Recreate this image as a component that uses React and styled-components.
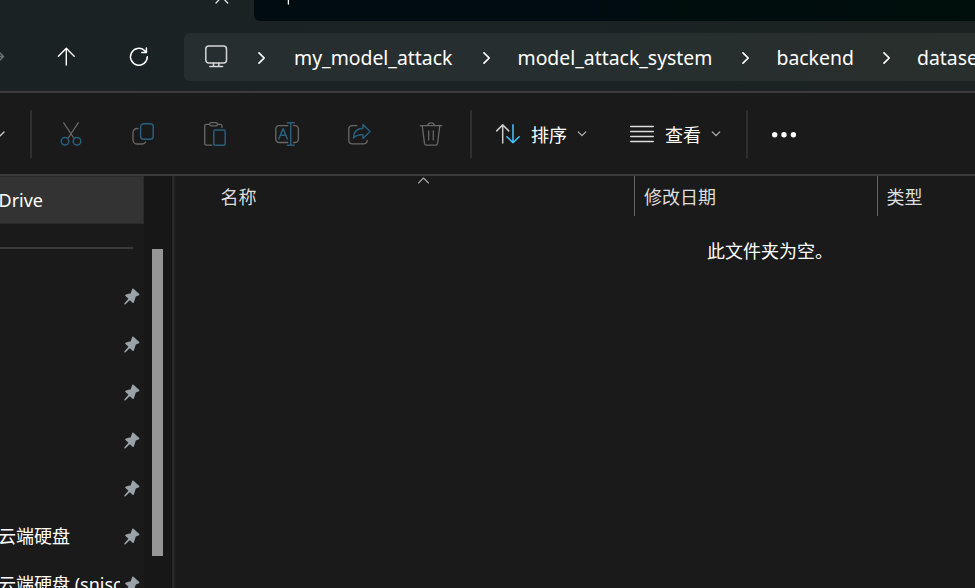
import React from "react";
import styled, { createGlobalStyle } from "styled-components";

const GlobalStyle = createGlobalStyle`
  * { box-sizing: border-box; }
  html, body { margin: 0; background: #1a1a1a; overflow: hidden; }
  body { font-family: "Noto Sans", "Noto Sans CJK SC", sans-serif; color: #fff; }
  svg { display: block; flex: none; overflow: visible; }
`;

const Window = styled.div`
  width: 975px;
  height: 588px;
  display: flex;
  flex-direction: column;
  overflow: hidden;
  background: #1a1a1a;
`;

const Header = styled.header`
  height: 93px;
  flex: none;
  background: linear-gradient(90deg, #1b2224, #1b2325 45%, #1c2221);
  border-bottom: 2px solid #3b3b3b;
`;

const TabStrip = styled.div`
  height: 21px;
  display: flex;
  overflow: hidden;
`;

const ActiveTab = styled.div`
  width: 254px;
  padding-left: 214px;
`;

const TabSpace = styled.div`
  flex: 1;
  padding-left: 26px;
  border-bottom-left-radius: 6px;
  background: linear-gradient(90deg, #000c10, #000c12 45%, #000d0d 60%, #000e0c);
`;

const NavBar = styled.nav`
  height: 70px;
  display: flex;
  align-items: center;
  padding-bottom: 1px;
`;

const NavSlot = styled.div`
  width: ${(p) => p.$width}px;
  height: 24px;
  flex: none;
  display: flex;
  padding-left: ${(p) => p.$inset || 0}px;
`;

const AddressBar = styled.div`
  width: 800px;
  height: 48px;
  margin-top: 3px;
  flex: none;
  display: flex;
  align-items: center;
  padding-left: 20px;
  border-radius: 6px;
  background: linear-gradient(90deg, #272e30, #272e2f 50%, #282f2c);
`;

const MonitorSlot = styled.div`
  width: 50px;
  flex: none;
  padding-bottom: 2px;
`;

const Crumb = styled.span`
  width: ${(p) => p.$width}px;
  flex: none;
  padding-top: 2px;
  font-size: 19.4px;
  line-height: 26px;
  white-space: nowrap;
`;

const ChevronSlot = styled.div`
  width: ${(p) => p.$width}px;
  flex: none;
  padding: 2px 0 0 4px;
`;

const Toolbar = styled.div`
  height: 83px;
  flex: none;
  display: flex;
  align-items: center;
  border-bottom: 2px solid #3b3b3b;
`;

const Separator = styled.div`
  width: 2px;
  height: 48px;
  flex: none;
  background: #2f2f2f;
`;

const Action = styled.div`
  width: 72px;
  height: 24px;
  flex: none;
  display: flex;
`;

const ActionGroup = styled.div`
  display: flex;
  width: 438px;
  flex: none;
  padding-left: 27px;
`;

const MenuButton = styled.div`
  display: flex;
  align-items: center;
  flex: none;
  width: ${(p) => p.$width}px;
  padding-left: ${(p) => p.$inset || 0}px;
  font-size: 18px;
  line-height: 24px;
`;

const MenuLabel = styled.span`
  width: 46px;
  flex: none;
  margin-left: 11px;
  padding-top: 2px;
`;

const OverflowChevron = styled.div`
  width: 30px;
  height: 24px;
  flex: none;
`;

const Body = styled.div`
  flex: 1;
  min-height: 0;
  display: flex;
`;

const Sidebar = styled.aside`
  width: 144px;
  flex: none;
  overflow: hidden;
`;

const SelectedItem = styled.div`
  height: 48px;
  display: flex;
  align-items: center;
  font-size: 18px;
  text-indent: -1.5px;
  background: #333;
  border: solid #2a2a2a;
  border-width: 1px 1px 1px 0;
`;

const SideRule = styled.div`
  width: 133px;
  height: 2px;
  margin: 23px 0;
  background: #3b3b3b;
`;

const PinnedItem = styled.div`
  height: 48px;
  display: flex;
  align-items: center;
  font-size: 18px;
`;

const ItemName = styled.span`
  width: 120px;
  margin: 0 4px 2px 0;
  flex: none;
  overflow: hidden;
  white-space: nowrap;
  text-indent: -2px;
`;

const ScrollTrack = styled.div`
  width: 27px;
  flex: none;
  padding: 73px 0 0 8px;
  background: #171717;
`;

const ScrollThumb = styled.div`
  width: 11px;
  height: 307px;
  background: #969696;
`;

const Splitter = styled.div`
  width: 5px;
  flex: none;
  background: #2a2a2a;
  border-left: 1px solid #121212;
  border-right: 2px solid #1f1f1f;
`;

const FileList = styled.main`
  flex: 1;
`;

const Columns = styled.div`
  display: flex;
  height: 40px;
`;

const Column = styled.div`
  width: ${(p) => p.$width}px;
  flex: none;
  display: flex;
  padding-left: ${(p) => p.$inset}px;
  border-right: 1px solid #666;
  color: #dedede;
  font-size: 18px;
  line-height: 42px;
`;

const ColumnLabel = styled.span`
  width: ${(p) => p.$width}px;
`;

const Empty = styled.p`
  margin: 22px 0 0 531px;
  font-size: 18px;
  line-height: 26px;
`;

const GRAY = "#686868";
const BLUE = "#285f7d";

const Icon = ({ w = 24, h = 24, stroke = GRAY, sw = 1.3, children }) => (
  <svg width={w} height={h} viewBox={`0 0 ${w} ${h}`} fill="none" stroke={stroke} strokeWidth={sw} strokeLinecap="round" strokeLinejoin="round">
    {children}
  </svg>
);

const CrumbChevron = ({ width = 38.5 }) => (
  <ChevronSlot $width={width}>
    <Icon w={8} h={14} stroke="#fff" sw={1.7}><path d="M1 1.8 6.2 7 1 12.2" /></Icon>
  </ChevronSlot>
);

const MenuChevron = () => (
  <Icon w={10} h={6} stroke="#b8b8b8" sw={1.2}><path d="M1.2.9 5 4.7 8.8.9" /></Icon>
);

const Pin = () => (
  <svg width="16" height="17" viewBox="0 0 16 17" fill="#98a2a8">
    <path d="M9.2.5 15.5 6.2 15 7.3 11.8 8.6 9.8 14.7 8.8 15 5.8 12.2 1.2 16.4.2 16.5.3 15.4 4.4 10.7 1.2 7.7 1.3 6.7 6.7 5.2 8.2.8Z" />
  </svg>
);

const pinned = ["", "", "", "", "", "云端硬盘", "云端硬盘 (snisc"];

export default function App() {
  return (
    <Window>
      <GlobalStyle />
      <Header>
        <TabStrip>
          <ActiveTab>
            <Icon w={16} h={6} stroke="#e6e6e6" sw={1.3}><path d="M2 3 7.8-3.2 13.7 3" /></Icon>
          </ActiveTab>
          <TabSpace>
            <Icon w={16} h={6} stroke="#fff" sw={1.3}><path d="M8.4-2V4M2-2H15" /></Icon>
          </TabSpace>
        </TabStrip>
        <NavBar>
          <NavSlot $width={54}>
            <Icon stroke="#6d7374" sw={1.5}><path d="M-12 12.5H3.5M-1 8 3.5 12.5-1 17" /></Icon>
          </NavSlot>
          <NavSlot $width={73}>
            <Icon stroke="#fff" sw={1.4}><path d="M12.3 21V4.3M4.4 12.2 12.3 4.3 20.2 12.2" /></Icon>
          </NavSlot>
          <NavSlot $width={57}>
            <Icon stroke="#fff" sw={1.5}><path d="M20.3 12.8A8.4 8.4 0 1 1 17.5 6.5L19.2 8.2M19.4 4.1V8.5H14.8" /></Icon>
          </NavSlot>
          <AddressBar>
            <MonitorSlot>
              <Icon stroke="#d5d7d7" sw={1.5}>
                <rect x="1.8" y="2" width="20.7" height="17" rx="3" />
                <path d="M9.5 19v3.5M14.8 19v3.5M5.8 22.6H18.6" />
              </Icon>
            </MonitorSlot>
            <CrumbChevron width={40} />
            <Crumb $width={185}>my_model_attack</Crumb>
            <CrumbChevron />
            <Crumb $width={220.5}>model_attack_system</Crumb>
            <CrumbChevron />
            <Crumb $width={102}>backend</Crumb>
            <CrumbChevron />
            <Crumb $width={100}>dataset</Crumb>
          </AddressBar>
        </NavBar>
      </Header>

      <Toolbar>
        <OverflowChevron>
          <Icon stroke="#ccc"><path d="M-4.5 10 0 14 4 10" /></Icon>
        </OverflowChevron>
        <Separator />
        <ActionGroup>
          <Action>
            <Icon>
              <path d="M4.7.8 14.8 16M19.2.8 9.2 16" />
              <g stroke={BLUE} strokeWidth="1.5"><circle cx="6" cy="19.3" r="3.8" /><circle cx="18" cy="19.3" r="3.8" /></g>
            </Icon>
          </Action>
          <Action>
            <Icon>
              <path d="M7 6.5H6A4 4 0 0 0 2 10.5V18A4 4 0 0 0 6 22h5.5Q13.8 22 14.5 20" />
              <rect x="9.6" y="1.8" width="12.6" height="15.5" rx="3" stroke={BLUE} strokeWidth="1.5" />
            </Icon>
          </Action>
          <Action>
            <Icon>
              <path d="M6.5 2.3H3.5Q1.7 2.3 1.7 4V21.5Q1.7 23.2 3.5 23.2H8.8M14.5 2.3H17.3Q19 2.3 19 4V5.5" />
              <rect x="6.7" y=".7" width="7.8" height="3.2" rx="1.6" />
              <rect x="10.8" y="7.9" width="11.4" height="15.3" rx="1.5" stroke={BLUE} strokeWidth="1.5" />
            </Icon>
          </Action>
          <Action>
            <Icon>
              <path d="M12.7 3.7H4A3.2 3.2 0 0 0 .8 7V17.2A3.2 3.2 0 0 0 4 20.5h8.7M18.6 3.7H20A3.2 3.2 0 0 1 23.4 7V17.2A3.2 3.2 0 0 1 20 20.5H18.6" />
              <g stroke={BLUE} strokeWidth="1.5"><path d="M15.7.7V23.2M12.3.7H19.2M12.3 23.2H19.2M3.8 17 8.1 6.6 12.4 17M5.3 13.2H11" /></g>
            </Icon>
          </Action>
          <Action>
            <Icon>
              <path d="M9.8 3.7H5.2A3.5 3.5 0 0 0 1.8 7.2V18.3A3.5 3.5 0 0 0 5.2 21.8H16.8A3.5 3.5 0 0 0 20.2 18.3" />
              <path d="M16 2.5 23 9.5 16 16.5V12.7C11.8 12.5 8.8 13 6.4 16 6.6 10.2 9.8 6.5 16 6.3Z" stroke={BLUE} strokeWidth="1.5" />
            </Icon>
          </Action>
          <Action>
            <Icon>
              <path d="M1.3 3.6H22.8M3.2 3.6 5.5 21.4Q5.8 23.2 7.5 23.2H16.6Q18.3 23.2 18.6 21.4L20.8 3.6M8.8 3.2C9.3 0 14.8 0 15.3 3.2M9.7 9V17.8M14.3 9V17.8" />
            </Icon>
          </Action>
        </ActionGroup>
        <Separator />
        <MenuButton $width={158} $inset={24}>
          <Icon stroke="#ccc" sw={1.5}>
            <path d="M6.7 21V2.9M.7 8.9 6.7 2.9 12.7 8.9" />
            <path d="M17 2.8V20.8M10.9 14.7 17 20.8 23.1 14.7" stroke="#4cc2ff" />
          </Icon>
          <MenuLabel>排序</MenuLabel>
          <MenuChevron />
        </MenuButton>
        <MenuButton $width={116}>
          <Icon stroke="#ddd" sw={1.4}><path d="M.7 4.5H23.3M.7 9.5H23.3M.7 14.5H23.3M.7 19.5H23.3" /></Icon>
          <MenuLabel>查看</MenuLabel>
          <MenuChevron />
        </MenuButton>
        <Separator />
        <NavSlot $width={60} $inset={24}>
          <svg width="24" height="24" viewBox="0 0 24 24" fill="#fff">
            <circle cx="2.7" cy="12.7" r="2.7" /><circle cx="12" cy="12.7" r="2.7" /><circle cx="21.4" cy="12.7" r="2.7" />
          </svg>
        </NavSlot>
      </Toolbar>

      <Body>
        <Sidebar>
          <SelectedItem>Drive</SelectedItem>
          <SideRule />
          {pinned.map((name, i) => (
            <PinnedItem key={i}><ItemName>{name}</ItemName><Pin /></PinnedItem>
          ))}
        </Sidebar>
        <ScrollTrack><ScrollThumb /></ScrollTrack>
        <Splitter />
        <FileList>
          <Columns>
            <Column $width={459} $inset={44.5}>
              <ColumnLabel $width={196.5}>名称</ColumnLabel>
              <Icon w={13} h={9} stroke="#a8a8a8" sw={1.1}><path d="M1.5 7 6.5 2 11.5 7" /></Icon>
            </Column>
            <Column $width={243} $inset={9}>修改日期</Column>
            <Column $width={200} $inset={8.5}>类型</Column>
          </Columns>
          <Empty>此文件夹为空。</Empty>
        </FileList>
      </Body>
    </Window>
  );
}
